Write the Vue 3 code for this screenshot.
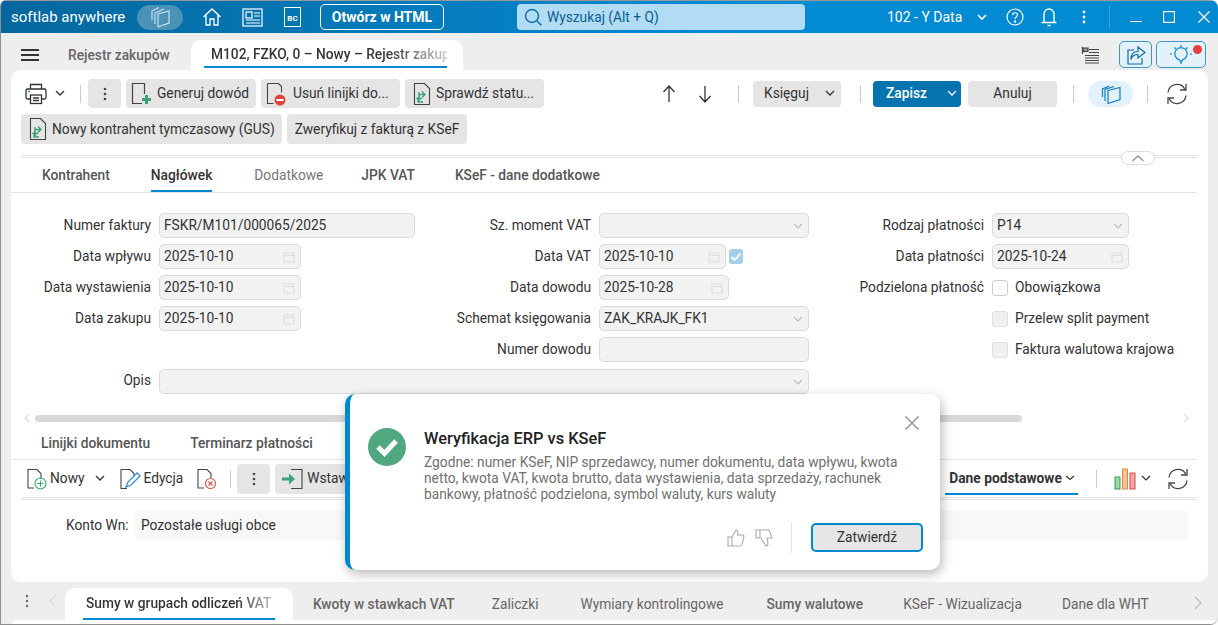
<script setup>
const bottomTabs = [
  { t: 'Kwoty w stawkach VAT', w: 500, ml: 20 },
  { t: 'Zaliczki', w: 400, ml: 37 },
  { t: 'Wymiary kontrolingowe', w: 400, ml: 42 },
  { t: 'Sumy walutowe', w: 500, ml: 43 },
  { t: 'KSeF - Wizualizacja', w: 400, ml: 40 },
  { t: 'Dane dla WHT', w: 400, ml: 40 },
]
</script>

<template>
  <div class="win">
    <header class="top">
      <span class="brand">softlab anywhere</span>
      <span class="pill">
        <svg width="24" height="24" viewBox="0 0 24 24" fill="none" stroke="#d4e8f3" stroke-width="1.100"><path d="M10 9l11-3v12l-11 4z"/><path d="M7 19V8l9-4"/><path d="M4 15V6l7-3.500"/></svg>
      </span>
      <svg class="home" width="20" height="20" viewBox="0 0 20 20" fill="none" stroke="#fff" stroke-width="1.300"><path d="M1.500 10L10 2l8.500 8M4 8v10h4v-6h4v6h4V8"/></svg>
      <svg class="news" width="21" height="19" viewBox="0 0 21 19" fill="none" stroke="#fff" stroke-width="1.2"><rect x="1" y="1" width="19" height="17"/><rect x="4" y="4" width="6" height="6"/><path d="M12 5h6M12 8h6M4 12h14M4 15h14"/></svg>
      <span class="bc">BC</span>
      <button class="html">Otwórz w HTML</button>
      <div class="search">
        <svg width="20" height="20" viewBox="0 0 20 20" fill="none" stroke="#0b6fa8" stroke-width="1.4"><circle cx="9" cy="9" r="6.500"/><path d="M14 14l4.500 4.500"/></svg>
        <span>Wyszukaj (Alt + Q)</span>
      </div>
      <span class="co">102 - Y Data</span>
      <svg class="cv1" width="12" height="8" viewBox="0 0 12 8" fill="none" stroke="#fff" stroke-width="1.6"><path d="M2 2l4 4 4-4"/></svg>
      <svg class="help" width="18" height="18" viewBox="0 0 18 18" fill="none" stroke="#fff" stroke-width="1.2"><circle cx="9" cy="9" r="8"/><path d="M6.500 7c0-3 5-3 5 0 0 2-2.500 2-2.500 4"/><circle cx="9" cy="13.500" r=".6" fill="#fff"/></svg>
      <svg class="bell" width="18" height="20" viewBox="0 0 18 20" fill="none" stroke="#fff" stroke-width="1.4"><path d="M4 15V7a5 5 0 0110 0v8M1.500 15.500h15M7.500 18.500h3"/></svg>
      <svg class="dots" width="4" height="14" viewBox="0 0 4 14" fill="#fff"><circle cx="2" cy="2" r="1.400"/><circle cx="2" cy="7" r="1.400"/><circle cx="2" cy="12" r="1.400"/></svg>
      <i class="tdiv"></i>
      <svg class="min" width="12" height="12" viewBox="0 0 12 12" stroke="#fff" stroke-width="1.2"><path d="M0 10.500h12"/></svg>
      <svg class="max" width="12" height="12" viewBox="0 0 12 12" fill="none" stroke="#fff" stroke-width="1.2"><rect x=".6" y=".6" width="10.800" height="10.800"/></svg>
      <svg class="close" width="12" height="12" viewBox="0 0 12 12" stroke="#fff" stroke-width="1.2"><path d="M.5.500l11 11M11.500.500l-11 11"/></svg>
    </header>

    <div class="tabbar">
      <svg class="burger" width="18" height="12" viewBox="0 0 18 12" stroke="#333" stroke-width="2"><path d="M0 1h18M0 6h18M0 11h18"/></svg>
      <span class="tab1">Rejestr zakupów</span>
      <div class="tabActive"><span class="fade">M102, FZKO, 0 – Nowy – Rejestr zakupów</span></div>
      <svg class="listIc" width="19" height="17" viewBox="0 0 19 17" stroke="#444" stroke-width="1.200" fill="none"><path d="M1.500 0v7"/><path d="M2 1h5v3.500H2z" fill="#999"/><path d="M8 2.500h10M8 5.500h10M4 8.500h14M4 11h14M4 13.500h14M4 16h14"/></svg>
      <button class="sq share">
        <svg width="22" height="22" viewBox="0 0 22 22" fill="none" stroke="#0b6fa8" stroke-width="1.200"><path d="M9 6H3v14h14v-6"/><path d="M13 3l7 5.500-7 5.500v-3.500c-3 0-6 1.500-7 5 0-6 3-8 7-8z"/></svg>
      </button>
      <button class="sq bulb">
        <svg width="26" height="24" viewBox="0 0 26 24" fill="none" stroke="#0b86c9" stroke-width="1.200"><path d="M13 20l-1.500-3.200a6.200 6.200 0 113 0z"/><path d="M13 2v2M4 11H2M24 11h-2M6.500 4.500L8 6M19.500 4.500L18 6"/></svg>
        <i class="dot"></i>
      </button>
    </div>

    <main class="card">
      <div class="tb1">
        <svg class="print" width="22" height="22" viewBox="0 0 22 22" fill="none" stroke="#333" stroke-width="1.300"><path d="M5.500 6V1.500h11V6"/><rect x="1" y="6" width="20" height="10" rx="1.500"/><rect x="5.500" y="12" width="11" height="8.500" fill="#fff"/><path d="M8 15h6M8 17.500h6"/><path d="M3 8.500h2" stroke="#2e8fcc"/></svg>
        <svg class="cv" width="10" height="7" viewBox="0 0 10 7" fill="none" stroke="#333" stroke-width="1.300"><path d="M1 1l4 4 4-4"/></svg>
        <i class="vd vd1"></i>
        <button class="gb more"><svg width="4" height="14" viewBox="0 0 4 14" fill="#444"><circle cx="2" cy="2" r="1.300"/><circle cx="2" cy="7" r="1.300"/><circle cx="2" cy="12" r="1.300"/></svg></button>
        <button class="gb w130">
          <svg width="22" height="24" viewBox="0 0 22 24" fill="none"><path d="M11 21.500H1.500v-20h12V12" stroke="#444" stroke-width="1.200"/><path d="M15.500 13v9M11 17.500h9" stroke="#3da377" stroke-width="3"/></svg>
          Generuj dowód
        </button>
        <button class="gb w139">
          <svg width="22" height="24" viewBox="0 0 22 24" fill="none"><path d="M1.500 1.500h11l3 3v6M1.500 1.500v20h6" stroke="#444" stroke-width="1.100"/><circle cx="14" cy="18" r="5.500" fill="#d9473f"/><path d="M10.500 18h7" stroke="#fff" stroke-width="2"/></svg>
          Usuń linijki do...
        </button>
        <button class="gb w139b">
          <svg width="18" height="24" viewBox="0 0 18 24" fill="none"><path d="M1.500 1.500h10l5 5v16h-15z" stroke="#444" stroke-width="1.100"/><path d="M6 12.500h5M9 9.500l3 3-3 3M6 10v5M9 16.500H5M7 14.500l-3 2 3 2M5 16.500v3.500h5" stroke="#3da377" stroke-width="1.400"/></svg>
          Sprawdź statu...
        </button>

        <svg class="up" width="14" height="18" viewBox="0 0 14 18" fill="none" stroke="#333" stroke-width="1.300"><path d="M7 17V1M1.500 7L7 1l5.500 6"/></svg>
        <svg class="down" width="14" height="18" viewBox="0 0 14 18" fill="none" stroke="#333" stroke-width="1.300"><path d="M7 1v16M1.500 11L7 17l5.500-6"/></svg>
        <i class="vd vd2"></i>
        <button class="gb ks">Księguj
          <svg width="10" height="7" viewBox="0 0 10 7" fill="none" stroke="#333" stroke-width="1.300"><path d="M1 1l4 4 4-4"/></svg>
        </button>
        <i class="vd vd3"></i>
        <button class="save">Zapisz
          <svg width="10" height="7" viewBox="0 0 10 7" fill="none" stroke="#fff" stroke-width="1.300"><path d="M1 1l4 4 4-4"/></svg>
        </button>
        <button class="gb cancel">Anuluj</button>
        <i class="vd vd4"></i>
        <span class="pill2">
          <svg width="22" height="22" viewBox="0 0 22 22" fill="none" stroke="#0b7cc0" stroke-width="1.200"><path d="M8 7.500l12-3v12l-12 4z"/><path d="M5 18V6.500l9-3"/><path d="M2.500 14V6l7-3"/></svg>
        </span>
        <i class="vd vd5"></i>
        <svg class="refresh" width="24" height="24" viewBox="0 0 24 24" fill="none" stroke="#444" stroke-width="1.300"><path d="M3 10.500A9 9 0 0120 7.500"/><path d="M21 2v6h-6"/><path d="M21 13.500A9 9 0 014 16.500"/><path d="M3 22v-6h6"/></svg>
      </div>

      <div class="tb2">
        <button class="gb nk">
          <svg width="18" height="24" viewBox="0 0 18 24" fill="none"><path d="M1.500 1.500h10l5 5v16h-15z" stroke="#444" stroke-width="1.100"/><path d="M6 12.500h5M9 9.500l3 3-3 3M6 10v5M9 16.500H5M7 14.500l-3 2 3 2M5 16.500v3.500h5" stroke="#3da377" stroke-width="1.400"/></svg>
          Nowy kontrahent tymczasowy (GUS)
        </button>
        <button class="gb zw">Zweryfikuj z fakturą z KSeF</button>
      </div>

      <div class="dbl"><span class="collapse"><svg width="14" height="8" viewBox="0 0 14 8" fill="none" stroke="#999" stroke-width="1.600"><path d="M1.500 7L7 2l5.500 5"/></svg></span></div>

      <nav class="tabs">
        <span class="t tk">Kontrahent</span>
        <span class="t act">Nagłówek</span>
        <span class="t gr">Dodatkowe</span>
        <span class="t tj">JPK VAT</span>
        <span class="t ts">KSeF - dane dodatkowe</span>
      </nav>

      <section class="form">
        <label>Numer faktury</label>
        <div class="inp">FSKR/M101/000065/2025</div>
        <label>Sz. moment VAT</label>
        <div class="inp sel"><svg class="cvg" width="10" height="6" viewBox="0 0 10 6" fill="none" stroke="#bbb" stroke-width="1.100"><path d="M1 1l4 4 4-4"/></svg></div>
        <label>Rodzaj płatności</label>
        <div class="inp sel s137">P14<svg class="cvg" width="10" height="6" viewBox="0 0 10 6" fill="none" stroke="#bbb" stroke-width="1.100"><path d="M1 1l4 4 4-4"/></svg></div>

        <label>Data wpływu</label>
        <div class="inp d142">2025-10-10<svg class="cal" width="12" height="12" viewBox="0 0 12 12" fill="none" stroke="#ddd"><path d="M1 2h10v9H1zM1 4.500h10"/></svg></div>
        <label>Data VAT</label>
        <div class="dv">
          <div class="inp d127">2025-10-10<svg class="cal" width="12" height="12" viewBox="0 0 12 12" fill="none" stroke="#ddd"><path d="M1 2h10v9H1zM1 4.500h10"/></svg></div>
          <span class="chk"><svg width="12" height="10" viewBox="0 0 12 10" fill="none" stroke="#fff" stroke-width="1.800"><path d="M1.500 5l3 3 6-6.500"/></svg></span>
        </div>
        <label>Data płatności</label>
        <div class="inp s137">2025-10-24<svg class="cal" width="12" height="12" viewBox="0 0 12 12" fill="none" stroke="#ddd"><path d="M1 2h10v9H1zM1 4.500h10"/></svg></div>

        <label>Data wystawienia</label>
        <div class="inp d142">2025-10-10<svg class="cal" width="12" height="12" viewBox="0 0 12 12" fill="none" stroke="#ddd"><path d="M1 2h10v9H1zM1 4.500h10"/></svg></div>
        <label>Data dowodu</label>
        <div class="inp d130">2025-10-28<svg class="cal" width="12" height="12" viewBox="0 0 12 12" fill="none" stroke="#ddd"><path d="M1 2h10v9H1zM1 4.500h10"/></svg></div>
        <label>Podzielona płatność</label>
        <div class="cb"><i class="box"></i>Obowiązkowa</div>

        <label>Data zakupu</label>
        <div class="inp d142">2025-10-10<svg class="cal" width="12" height="12" viewBox="0 0 12 12" fill="none" stroke="#ddd"><path d="M1 2h10v9H1zM1 4.500h10"/></svg></div>
        <label>Schemat księgowania</label>
        <div class="inp sel">ZAK_KRAJK_FK1<svg class="cvg" width="10" height="6" viewBox="0 0 10 6" fill="none" stroke="#bbb" stroke-width="1.100"><path d="M1 1l4 4 4-4"/></svg></div>
        <label></label>
        <div class="cb"><i class="box dis"></i>Przelew split payment</div>

        <label class="c3">Numer dowodu</label>
        <div class="inp"></div>
        <label></label>
        <div class="cb"><i class="box dis"></i>Faktura walutowa krajowa</div>

        <label>Opis</label>
        <div class="inp sel opis"><svg class="cvg" width="10" height="6" viewBox="0 0 10 6" fill="none" stroke="#bbb" stroke-width="1.100"><path d="M1 1l4 4 4-4"/></svg></div>
      </section>

      <div class="scroll">
        <svg width="7" height="10" viewBox="0 0 7 10" fill="none" stroke="#ddd" stroke-width="1.200"><path d="M6 1L2 5l4 4"/></svg>
        <i class="thumb"></i>
        <svg class="sr" width="7" height="10" viewBox="0 0 7 10" fill="none" stroke="#ddd" stroke-width="1.200"><path d="M1 1l4 4-4 4"/></svg>
      </div>

      <nav class="tabs2">
        <span class="l1">Linijki dokumentu</span>
        <span class="l2">Terminarz płatności</span>
      </nav>

      <div class="tb3">
        <svg class="ml15" width="22" height="22" viewBox="0 0 22 22" fill="none"><path d="M8 20H2V1.500h9l4 4V11" stroke="#444" stroke-width="1.100"/><circle cx="14.500" cy="15.500" r="5.500" stroke="#2fae5e" stroke-width="1.100"/><path d="M14.500 12.500v6M11.500 15.500h6" stroke="#2fae5e" stroke-width="1.100"/></svg>
        <span class="n1">Nowy</span>
        <svg class="n2" width="10" height="7" viewBox="0 0 10 7" fill="none" stroke="#333" stroke-width="1.300"><path d="M1 1l4 4 4-4"/></svg>
        <svg class="n3" width="22" height="22" viewBox="0 0 22 22" fill="none"><path d="M8 20.500H2V1.500h9l4 4v3" stroke="#444" stroke-width="1.100"/><path d="M7 19l2-5L18 5l3 3-9 9z" stroke="#2f8fd3" stroke-width="1.300"/></svg>
        <span class="n4">Edycja</span>
        <svg class="n5" width="22" height="22" viewBox="0 0 22 22" fill="none"><path d="M8 20H2V1.500h9l4 4V10" stroke="#444" stroke-width="1.100"/><circle cx="14.500" cy="15.500" r="5" stroke="#e0524a" stroke-width="1.100"/><path d="M12.500 13.500l4 4M16.500 13.500l-4 4" stroke="#e0524a" stroke-width="1.100"/></svg>
        <i class="vd vd6"></i>
        <button class="gb more m2"><svg width="4" height="14" viewBox="0 0 4 14" fill="#444"><circle cx="2" cy="2" r="1.300"/><circle cx="2" cy="7" r="1.300"/><circle cx="2" cy="12" r="1.300"/></svg></button>
        <button class="gb wst">
          <svg width="22" height="22" viewBox="0 0 22 22" fill="none"><path d="M9 1.500h11v19H9" stroke="#444" stroke-width="1.100"/><path d="M0 11h8" stroke="#3da377" stroke-width="3"/><path d="M7 5.500l6 5.500-6 5.500z" fill="#3da377"/></svg>
          Wstaw
        </button>
        <span class="dp">Dane podstawowe
          <svg width="10" height="6" viewBox="0 0 10 6" fill="none" stroke="#333" stroke-width="1.200"><path d="M1 1l4 3.500L9 1"/></svg>
        </span>
        <i class="vd vd7"></i>
        <svg class="chart" width="22" height="22" viewBox="0 0 22 22"><rect x="1" y="9" width="5" height="12" fill="#9ed6ae" stroke="#33a04f"/><rect x="8.500" y="1" width="5" height="20" fill="#f7c29c" stroke="#ea8434"/><rect x="16" y="5" width="5" height="16" fill="#f2a6a6" stroke="#de4545"/></svg>
        <svg class="cvc" width="10" height="7" viewBox="0 0 10 7" fill="none" stroke="#333" stroke-width="1.200"><path d="M1 1l4 4 4-4"/></svg>
        <svg class="refresh2" width="24" height="24" viewBox="0 0 24 24" fill="none" stroke="#444" stroke-width="1.300"><path d="M3 10.500A9 9 0 0120 7.500"/><path d="M21 2v6h-6"/><path d="M21 13.500A9 9 0 014 16.500"/><path d="M3 22v-6h6"/></svg>
      </div>

      <div class="konto">
        <span class="kl">Konto Wn:</span>
        <div class="kf">Pozostałe usługi obce</div>
      </div>
    </main>

    <footer class="bottom">
      <svg class="bd" width="4" height="14" viewBox="0 0 4 14" fill="#666"><circle cx="2" cy="2" r="1.200"/><circle cx="2" cy="7" r="1.200"/><circle cx="2" cy="12" r="1.200"/></svg>
      <svg class="bl" width="8" height="14" viewBox="0 0 8 14" fill="none" stroke="#ddd" stroke-width="1.200"><path d="M7 1L1 7l6 6"/></svg>
      <div class="bact"><span class="fade2">Sumy w grupach odliczeń VAT</span></div>
      <span v-for="b in bottomTabs" :key="b.t" class="bt" :style="{ marginLeft: b.ml + 'px', fontWeight: b.w }">{{ b.t }}</span>
      <svg class="br" width="8" height="14" viewBox="0 0 8 14" fill="none" stroke="#bbb" stroke-width="1.200"><path d="M1 1l6 6-6 6"/></svg>
    </footer>
    <div class="end"></div>

    <aside class="modal">
      <svg class="ok" width="38" height="38" viewBox="0 0 38 38"><circle cx="19" cy="19" r="19" fill="#4fa87f"/><path d="M10 19l6.500 6.500L28 13" fill="none" stroke="#fff" stroke-width="5"/></svg>
      <div class="mbody">
        <h2>Weryfikacja ERP vs KSeF</h2>
        <p>Zgodne: numer KSeF, NIP sprzedawcy, numer dokumentu, data wpływu, kwota netto, kwota VAT, kwota brutto, data wystawienia, data sprzedaży, rachunek bankowy, płatność podzielona, symbol waluty, kurs waluty</p>
      </div>
      <svg class="mx" width="16" height="16" viewBox="0 0 16 16" stroke="#999" stroke-width="1.600"><path d="M1.500 1.500l13 13M14.500 1.500l-13 13"/></svg>
      <div class="mfoot">
        <svg width="18" height="18" viewBox="0 0 18 18" fill="none" stroke="#aaa" stroke-width="1.100"><path d="M1 8h4v9H1zM5 8l4-7c2 0 2 2 1.500 5H16c1 0 1 1 .8 2l-1.600 7c-.2 1-1 2-2 2H5"/></svg>
        <svg class="td" width="18" height="18" viewBox="0 0 18 18" fill="none" stroke="#aaa" stroke-width="1.100"><path d="M1 1h4v8H1zM5 1h9l3 8h-5l1 5c0 2-1 3-2 3L6 9"/></svg>
        <i class="mdiv"></i>
        <button class="ack">Zatwierdź</button>
      </div>
    </aside>
  </div>
</template>

<style scoped>
.win { position: relative; width: 1218px; height: 625px; overflow: hidden; background: #eee; display: flex; flex-direction: column; font: 13.750px/1.2 Roboto, sans-serif; color: #333; box-sizing: border-box; border: 1px solid #8f8f8f; border-top: 0; border-right: 0; border-radius: 6px 8px 8px 0; }
button { font: inherit; border: 0; padding: 0; color: #333; }
i { display: block; }
.top { flex: none; height: 33px; display: flex; align-items: center; color: #fff; background: linear-gradient(90deg, #04679e 0, #0579b8 30%, #028ad3 60%, #028ad3 100%); border-top: 1px solid #9a9a9a; box-sizing: border-box; }
.brand { margin-left: 10px; font-size: 15px; width: 116px; white-space: nowrap; }
.pill { margin-left: 10px; width: 46px; height: 25px; border-radius: 13px; background: #4b92b9; display: flex; align-items: center; justify-content: center; }
.home { margin-left: 19px; }
.news { margin-left: 20px; }
.bc { margin-left: 21px; width: 17px; height: 20px; border: 1px solid #fff; font-size: 8px; font-weight: 700; display: flex; align-items: flex-end; justify-content: center; padding-bottom: 2px; box-sizing: border-box; }
.html { margin-left: 19px; width: 124px; height: 26px; border: 1px solid #fff; border-radius: 5px; background: transparent; color: #fff; font-weight: 700; font-size: 14px; }
.search { margin-left: 73px; width: 288px; height: 26px; border-radius: 4px; background: #b1dcf3; display: flex; align-items: center; color: #0b5e8f; padding-left: 6px; box-sizing: border-box; gap: 4px; }
.co { margin-left: 82px; width: 74px; white-space: nowrap; font-size: 14px; }
.cv1 { margin-left: 15px; }
.help { margin-left: 18px; }
.bell { margin-left: 16px; }
.dots { margin-left: 24px; }
.tdiv { margin-left: 23px; width: 1px; height: 22px; background: #3da3dc; }
.min { margin-left: 20px; }
.max { margin-left: 21px; }
.close { margin-left: 23px; }

.tabbar { flex: none; height: 37px; display: flex; align-items: center; position: relative; }
.burger { margin-left: 20px; margin-top: 6px; }
.tab1 { margin-left: 29px; font-weight: 500; color: #666; margin-top: 7px; width: 103px; white-space: nowrap; }
.tabActive { margin-left: 20px; align-self: flex-end; height: 30px; width: 272px; background: #fff; border-radius: 10px 10px 0 0; box-sizing: border-box; padding: 0 13px; position: relative; }
.fade { display: block; line-height: 29px; padding-left: 7px; overflow: hidden; white-space: nowrap; border-bottom: 2px solid #0288d1; height: 28px; box-sizing: border-box; width: 243px; font-weight: 500; color: #333; background: linear-gradient(90deg, #333 75%, #ccc 100%); -webkit-background-clip: text; background-clip: text; -webkit-text-fill-color: transparent; }
.listIc { margin-left: 618px; margin-top: 7px; }
.sq { height: 27px; border: 1px solid #3d96c8; border-radius: 5px; background: #e3f1fa; display: flex; align-items: center; justify-content: center; margin-top: 6px; position: relative; }
.share { width: 33px; margin-left: 19px; }
.bulb { width: 50px; margin-left: 4px; }
.dot { position: absolute; width: 9px; height: 9px; border-radius: 50%; background: #e33f3f; right: 3px; top: 3px; }

.card { flex: none; margin-left: 10px; width: 1197px; height: 512px; background: #fff; border-radius: 10px; box-sizing: border-box; padding-top: 9px; overflow: hidden; }
.gb { height: 29px; border-radius: 4px; background: #e5e5e5; display: flex; align-items: center; flex: none; white-space: nowrap; }
.tb1 { display: flex; align-items: center; height: 29px; }
.print { margin-left: 14px; }
.cv { margin-left: 8px; }
.vd { width: 1px; height: 18px; background: #ccc; flex: none; }
.vd1 { margin-left: 15px; }
.more { margin-left: 7px; width: 33px; justify-content: center; }
.w130 { margin-left: 5px; width: 130px; padding-left: 5px; box-sizing: border-box; gap: 4px; }
.w139 { margin-left: 5px; width: 139px; padding-left: 5px; box-sizing: border-box; gap: 5px; }
.w139b { margin-left: 5px; width: 139px; padding-left: 8px; box-sizing: border-box; gap: 5px; }
.up { margin-left: 118px; }
.down { margin-left: 22px; }
.vd2 { margin-left: 26px; }
.ks { margin-left: 14px; width: 88px; height: 26px; padding: 0 6px 0 11px; box-sizing: border-box; justify-content: space-between; }
.vd3 { margin-left: 19px; }
.save { margin-left: 12px; width: 88px; height: 26px; background: #0573ad; color: #fff; border-radius: 4px; font-weight: 500; display: flex; align-items: center; justify-content: space-between; padding: 0 4px 0 13px; box-sizing: border-box; }
.cancel { margin-left: 7px; width: 89px; height: 26px; justify-content: center; }
.vd4 { margin-left: 16px; }
.pill2 { margin-left: 14px; width: 45px; height: 26px; border-radius: 13px; background: #e2f1fb; display: flex; align-items: center; justify-content: center; }
.vd5 { margin-left: 14px; }
.refresh { margin-left: 17px; }

.tb2 { display: flex; gap: 5px; margin: 6px 0 0 10px; }
.tb2 .gb { height: 30px; }
.nk { width: 261px; padding-left: 8px; box-sizing: border-box; gap: 5px; }
.zw { width: 180px; justify-content: center; }

.dbl { position: relative; margin: 11px 0 0 10px; width: 1176px; height: 3px; border-top: 1px solid #e4e4e4; border-bottom: 1px solid #e4e4e4; box-sizing: border-box; }
.collapse { position: absolute; left: 1100px; top: -5px; width: 34px; height: 14px; background: #fff; border: 1px solid #ddd; border-radius: 8px; display: flex; align-items: center; justify-content: center; box-sizing: border-box; }

.tabs { display: flex; height: 35px; align-items: center; padding-left: 10px; width: 1186px; border-bottom: 1px solid #e4e4e4; box-sizing: border-box; }
.t { font-weight: 500; color: #555; white-space: nowrap; line-height: 35px; }
.tk { margin-left: 21px; }
.t.act { margin-left: 41px; color: #333; border-bottom: 2px solid #0288d1; height: 34px; box-sizing: border-box; }
.t.gr { margin-left: 42px; font-weight: 400; color: #777; }
.tj { margin-left: 38px; }
.ts { margin-left: 40px; }

.form { display: grid; grid-template-columns: 148px 256px 184px 210px 183px 1fr; grid-auto-rows: 25px; row-gap: 6px; margin-top: 20px; align-items: center; }
.form label { text-align: right; padding-right: 8px; white-space: nowrap; color: #333; }
.form .c3 { grid-column: 3; }
.inp { height: 25px; border: 1px solid #d9d9d9; border-radius: 5px; background: #f2f2f2; box-sizing: border-box; padding-left: 4px; line-height: 23px; position: relative; color: #333; }
.cvg { position: absolute; right: 5px; top: 9px; }
.cal { position: absolute; right: 5px; top: 6px; }
.s137 { width: 137px; }
.d142 { width: 142px; }
.d127 { width: 127px; }
.d130 { width: 130px; }
.dv { display: flex; align-items: center; gap: 3px; }
.chk { width: 14px; height: 15px; border-radius: 3px; background: #a3cfe9; display: flex; align-items: center; justify-content: center; }
.cb { display: flex; align-items: center; white-space: nowrap; gap: 7px; }
.box { width: 14px; height: 14px; border: 1px solid #ccc; border-radius: 3px; background: #fff; }
.box.dis { background: #f0f0f0; border-color: #e0e0e0; }
.opis { grid-column: 2 / 5; margin-top: 1px; }

.scroll { display: flex; align-items: center; margin: 21px 0 0 12px; height: 8px; position: relative; }
.thumb { margin-left: 5px; width: 987px; height: 7px; border-radius: 4px; background: #d8d8d8; }
.sr { margin-left: 161px; }
.tabs2 { display: flex; height: 31px; align-items: flex-end; padding-bottom: 8px; box-sizing: border-box; font-weight: 500; color: #555; margin-top: 7px; border-bottom: 1px solid #e4e4e4; width: 1186px; }
.l1 { margin-left: 30px; }
.l2 { margin-left: 40px; }

.tb3 { display: flex; align-items: center; height: 37px; border-bottom: 3px double #e4e4e4; width: 1175px; margin-left: 11px; box-sizing: content-box; }
.ml15 { margin-left: 4px; }
.n1 { margin-left: 2px; }
.n2 { margin-left: 10px; }
.n3 { margin-left: 14px; }
.n4 { margin-left: 3px; }
.n5 { margin-left: 13px; }
.vd6 { margin-left: 12px; }
.m2.gb { margin-left: 6px; height: 30px; width: 33px; }
.wst { margin-left: 5px; height: 30px; width: 80px; padding-left: 7px; box-sizing: border-box; gap: 3px; }
.dp { margin-left: 590px; height: 31px; font-weight: 700; display: flex; align-items: center; justify-content: space-between; border-bottom: 2px solid #0288d1; padding: 0 3px 0 4px; box-sizing: border-box; width: 133px; flex: none; white-space: nowrap; margin-top: 1px; }
.vd7 { margin-left: 18px; }
.chart { margin-left: 17px; }
.cvc { margin-left: 5px; }
.refresh2 { margin-left: 15px; }

.konto { display: flex; align-items: center; margin-top: 10px; }
.kl { margin-left: 55px; width: 69px; white-space: nowrap; color: #333; }
.kf { width: 1053px; height: 30px; border-radius: 5px; background: #f8f8f8; line-height: 30px; padding-left: 6px; box-sizing: border-box; }

.bottom { flex: none; height: 38px; display: flex; align-items: center; position: relative; }
.bd { margin-left: 24px; }
.bl { margin-left: 20px; }
.bact { margin-left: 8px; width: 228px; height: 32px; background: #fff; border-radius: 10px 10px 0 0; align-self: flex-end; padding: 0 18px; box-sizing: border-box; }
.fade2 { display: block; height: 30px; line-height: 30px; border-bottom: 2px solid #0288d1; padding-left: 3px; font-weight: 500; white-space: nowrap; overflow: hidden; background: linear-gradient(90deg, #333 80%, #ccc 100%); -webkit-background-clip: text; background-clip: text; -webkit-text-fill-color: transparent; box-sizing: content-box; }
.bt { color: #666; white-space: nowrap; margin-top: 6px; }
.br { margin-left: 45px; margin-top: 4px; }
.end { flex: none; height: 5px; background: #fff; margin-left: 11px; border-radius: 6px 6px 0 0; }

.modal { position: absolute; left: 344px; top: 394px; width: 595px; height: 176px; box-sizing: border-box; background: #fff; border-left: 5px solid #0288d1; border-radius: 10px; box-shadow: 2px 4px 12px rgba(0,0,0,.28); }
.ok { position: absolute; left: 18px; top: 34px; }
.mbody { position: absolute; left: 74px; top: 35px; width: 490px; }
h2 { margin: 0 0 5px; font-size: 16.400px; font-weight: 500; color: #222; line-height: 20px; }
p { margin: 0; font-size: 13.750px; line-height: 16px; color: #707070; }
.mx { position: absolute; right: 20px; top: 21px; }
.mfoot { position: absolute; right: 17px; bottom: 17px; display: flex; align-items: center; }
.td { margin-left: 10px; }
.mdiv { margin-left: 18px; width: 1px; height: 31px; background: #e4e4e4; }
.ack { margin-left: 19px; width: 112px; height: 29px; border: 2px solid #0288d1; border-radius: 5px; background: #e5e5e5; }
</style>
